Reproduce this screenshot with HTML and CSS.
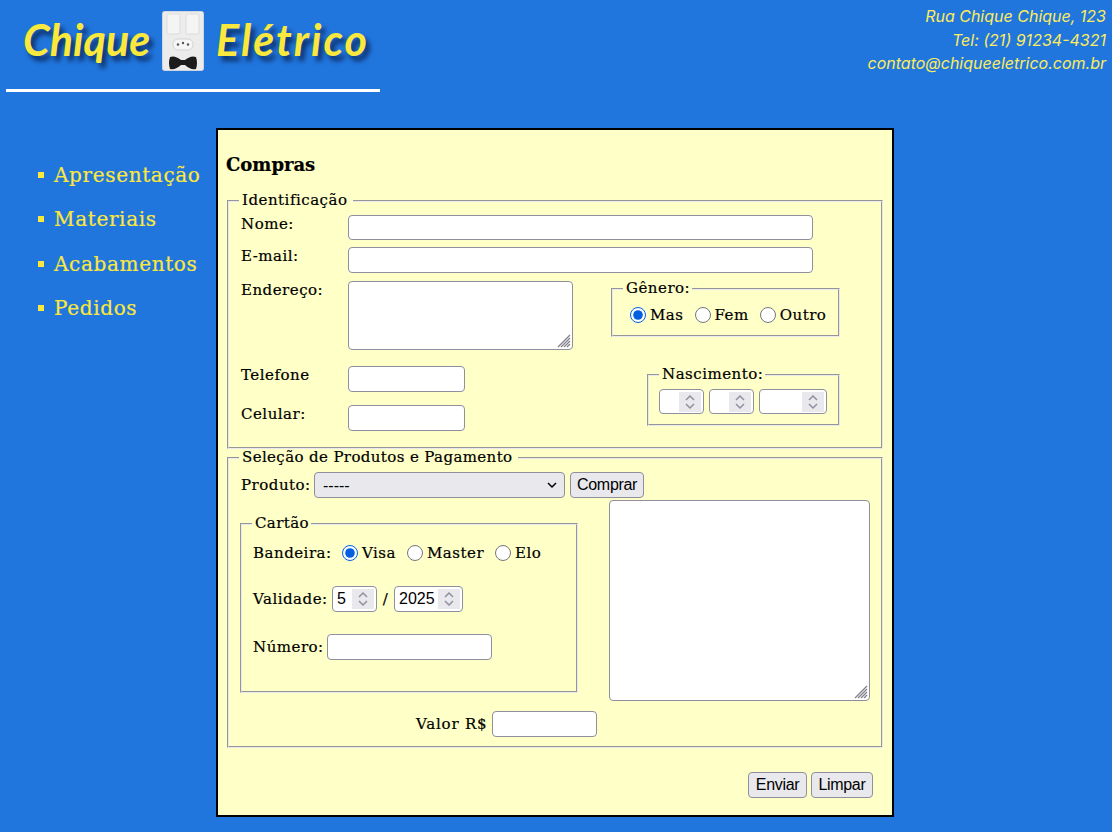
FILE: index.html
```html
<!DOCTYPE html>
<html lang="pt-BR">
<head>
    <meta charset="UTF-8">
    <meta name="viewport" content="width=device-width, initial-scale=1.0">
    <title>Chique Elétrico</title>
    <link rel="stylesheet" href="styles.css">
</head>
<body>
    <header class="topo">
        <div class="logo">
            <span class="logo-txt">Chique</span>
            <svg class="logo-img" width="42" height="60" viewBox="0 0 42 60">
                <rect x="0.5" y="0.5" width="41" height="59" rx="2" fill="#ececec" stroke="#cfd6e2"/>
                <rect x="5" y="3" width="13" height="20" rx="1" fill="#f4f4f4" stroke="#dcdcdc"/>
                <rect x="24" y="3" width="13" height="20" rx="1" fill="#f4f4f4" stroke="#dcdcdc"/>
                <rect x="11" y="28" width="20" height="11" rx="5" fill="#f6f6f6" stroke="#d4d4d4"/>
                <circle cx="16" cy="33.500" r="1.200" fill="#555"/>
                <circle cx="21" cy="32" r="1.200" fill="#555"/>
                <circle cx="26" cy="33.500" r="1.200" fill="#555"/>
                <path d="M8 46 Q13 44 19 49 L23 49 Q29 44 34 46 Q36 52 34 58 Q28 59 23 54 L19 54 Q14 59 8 58 Q6 52 8 46 Z" fill="#1c1c1c"/>
            </svg>
            <span class="logo-txt logo-el">Elétrico</span>
        </div>
        <address class="contato">
            Rua Chique Chique, 123<br>
            Tel: (21) 91234-4321<br>
            contato@chiqueeletrico.com.br
        </address>
    </header>

    <div class="pagina">
        <nav class="menu">
            <ul>
                <li><a href="#">Apresentação</a></li>
                <li><a href="#">Materiais</a></li>
                <li><a href="#">Acabamentos</a></li>
                <li><a href="#">Pedidos</a></li>
            </ul>
        </nav>

        <main class="caixa">
            <h2>Compras</h2>
            <form>
                <fieldset class="ident">
                    <legend>Identificação</legend>
                    <div class="linha l-nome">
                        <label class="rot">Nome:</label>
                        <input type="text" class="campo w-longo">
                    </div>
                    <div class="linha l-email">
                        <label class="rot">E-mail:</label>
                        <input type="text" class="campo w-longo">
                    </div>
                    <div class="ident-baixo">
                        <div class="col-esq">
                            <div class="linha">
                                <label class="rot">Endereço:</label>
                                <span class="area area-end">
                                    <textarea></textarea>
                                    <svg class="grip" width="14" height="14" viewBox="0 0 14 14"><path d="M13 1 L1 13 M13 4 L4 13 M13 7 L7 13 M13 10 L10 13" stroke="#80808c" fill="none"/></svg>
                                </span>
                            </div>
                            <div class="linha l-tel">
                                <label class="rot">Telefone</label>
                                <input type="text" class="campo w-tel">
                            </div>
                            <div class="linha l-cel">
                                <label class="rot">Celular:</label>
                                <input type="text" class="campo w-tel">
                            </div>
                        </div>
                        <div class="col-dir">
                            <fieldset class="genero">
                                <legend>Gênero:</legend>
                                <label class="opc"><input type="radio" name="genero" checked>Mas</label>
                                <label class="opc"><input type="radio" name="genero">Fem</label>
                                <label class="opc"><input type="radio" name="genero">Outro</label>
                            </fieldset>
                            <fieldset class="nasc">
                                <legend>Nascimento:</legend>
                                <span class="num w-45"><input type="text"><span class="spin"><svg width="12" height="18" viewBox="0 0 12 18"><path d="M2 7 L6 3 L10 7 M2 11 L6 15 L10 11" stroke="#8f8f9d" stroke-width="1.500" fill="none"/></svg></span></span>
                                <span class="num w-45"><input type="text"><span class="spin"><svg width="12" height="18" viewBox="0 0 12 18"><path d="M2 7 L6 3 L10 7 M2 11 L6 15 L10 11" stroke="#8f8f9d" stroke-width="1.500" fill="none"/></svg></span></span>
                                <span class="num w-68"><input type="text"><span class="spin"><svg width="12" height="18" viewBox="0 0 12 18"><path d="M2 7 L6 3 L10 7 M2 11 L6 15 L10 11" stroke="#8f8f9d" stroke-width="1.500" fill="none"/></svg></span></span>
                            </fieldset>
                        </div>
                    </div>
                </fieldset>

                <fieldset class="selecao">
                    <legend>Seleção de Produtos e Pagamento</legend>
                    <div class="linha l-prod">
                        <label class="prod-rot">Produto:</label>
                        <select class="produto"><option>-----</option></select>
                        <button type="button">Comprar</button>
                    </div>
                    <div class="pagamento">
                        <fieldset class="cartao">
                            <legend>Cartão</legend>
                            <div class="linha l-band">
                                <label class="band-rot">Bandeira:</label>
                                <label class="opc"><input type="radio" name="band" checked>Visa</label>
                                <label class="opc"><input type="radio" name="band">Master</label>
                                <label class="opc"><input type="radio" name="band">Elo</label>
                            </div>
                            <div class="linha l-val">
                                <label class="val-rot">Validade:</label>
                                <span class="num w-45"><input type="text" value="5"><span class="spin"><svg width="12" height="18" viewBox="0 0 12 18"><path d="M2 7 L6 3 L10 7 M2 11 L6 15 L10 11" stroke="#8f8f9d" stroke-width="1.500" fill="none"/></svg></span></span>
                                <span class="barra">/</span>
                                <span class="num w-69"><input type="text" value="2025"><span class="spin"><svg width="12" height="18" viewBox="0 0 12 18"><path d="M2 7 L6 3 L10 7 M2 11 L6 15 L10 11" stroke="#8f8f9d" stroke-width="1.500" fill="none"/></svg></span></span>
                            </div>
                            <div class="linha l-numero">
                                <label class="num-rot">Número:</label>
                                <input type="text" class="campo w-num">
                            </div>
                        </fieldset>
                        <span class="area area-lista">
                            <textarea></textarea>
                            <svg class="grip" width="14" height="14" viewBox="0 0 14 14"><path d="M13 1 L1 13 M13 4 L4 13 M13 7 L7 13 M13 10 L10 13" stroke="#80808c" fill="none"/></svg>
                        </span>
                    </div>
                    <div class="linha l-valor">
                        <label class="valor-rot">Valor R$</label>
                        <input type="text" class="campo w-valor">
                    </div>
                </fieldset>

                <div class="botoes">
                    <button type="submit">Enviar</button>
                    <button type="reset">Limpar</button>
                </div>
            </form>
        </main>
    </div>
</body>
</html>
```

FILE: styles.css
```css
* {
    box-sizing: border-box;
}
body {
    margin: 0;
    background-color: #2176dd;
    font-family: "DejaVu Serif", serif;
    font-size: 15px;
    letter-spacing: 0.5px;
    -webkit-text-stroke: 0.2px;
    color: #000;
}
.topo {
    display: flex;
    justify-content: space-between;
    align-items: flex-start;
    height: 128px;
    padding: 0 6px;
    letter-spacing: normal;
    -webkit-text-stroke: 0;
}
.logo {
    display: flex;
    align-items: flex-start;
    gap: 12px;
    width: 374px;
    height: 92px;
    padding: 11px 0 0 17px;
    border-bottom: 3px solid #fff;
}
.logo-txt {
    font-family: "Lato", sans-serif;
    font-style: italic;
    font-weight: 700;
    font-size: 43px;
    line-height: 58px;
    color: #fbe83c;
    text-shadow: 4px 5px 5px #0b2c63;
}
.logo-el {
    letter-spacing: 2px;
}
.logo-img {
    display: block;
}
.contato {
    padding-top: 5px;
    font-family: "Inter", sans-serif;
    font-style: italic;
    font-size: 16px;
    line-height: 23.500px;
    text-align: right;
    color: #fbec5e;
}
.pagina {
    display: flex;
    align-items: flex-start;
}
.menu {
    width: 216px;
}
.menu ul {
    margin: 0;
    padding: 25px 0 0 38px;
    list-style: none;
}
.menu li {
    display: flex;
    align-items: center;
    gap: 10px;
    height: 44.300px;
    font-size: 20px;
    letter-spacing: 0.65px;
}
.menu li::before {
    content: "";
    width: 6px;
    height: 6px;
    background-color: #fbe83c;
}
.menu a {
    color: #fbe83c;
    text-decoration: none;
}
.caixa {
    width: 678px;
    height: 689px;
    padding: 0 8px;
    background-color: #ffffc8;
    border: 2px solid #000;
}
h2 {
    margin: 0;
    padding-top: 24px;
    height: 62px;
    font-size: 18px;
    letter-spacing: 0;
    line-height: 22px;
}
fieldset {
    margin: 0 1px;
    padding: 0 12px;
    border: 2px groove #e9e9ed;
}
legend {
    margin-left: -2px;
    padding: 0 6px 0 3px;
    line-height: 17px;
}
.selecao legend {
    letter-spacing: 0.38px;
}
.ident {
    height: 257px;
}
.selecao {
    height: 299px;
}
.linha {
    display: flex;
    align-items: flex-start;
}
.rot {
    width: 107px;
    padding-top: 1px;
    line-height: 17px;
}
input,
textarea,
select,
button {
    -webkit-text-stroke: 0;
}
input[type="text"] {
    font-family: "Liberation Sans", sans-serif;
    font-size: 16px;
    outline: none;
}
input[type="radio"] {
    accent-color: #0060df;
}
.campo {
    height: 26px;
    padding: 0 4px;
    background: #fff;
    border: 1px solid #8f8f9d;
    border-radius: 4px;
}
.w-longo {
    width: 465px;
}
.w-tel {
    width: 117px;
}
.w-num {
    width: 165px;
}
.w-valor {
    width: 105px;
}
.l-nome {
    margin-top: 6px;
}
.l-nome .campo {
    height: 25px;
}
.l-email {
    margin-top: 7px;
}
.ident-baixo {
    display: flex;
    justify-content: space-between;
    margin-top: 8px;
}
.l-tel {
    margin-top: 16px;
}
.l-cel {
    margin-top: 13px;
}
.area {
    display: block;
    position: relative;
}
.area textarea {
    display: block;
    width: 100%;
    height: 100%;
    background: #fff;
    border: 1px solid #8f8f9d;
    border-radius: 4px;
    resize: none;
    outline: none;
}
.grip {
    position: absolute;
    right: 2px;
    bottom: 2px;
}
.grip path {
    stroke-width: 1.300;
}
.area-end {
    width: 225px;
    height: 69px;
}
.area-lista {
    width: 261px;
    height: 201px;
    margin-right: -1px;
}
.col-dir {
    display: flex;
    flex-direction: column;
    align-items: flex-end;
    padding-right: 29px;
}
.genero {
    display: flex;
    gap: 11px;
    width: 229px;
    height: 57px;
    margin: -1px 0 0;
    padding: 8px 10px 0 17px;
}
.genero legend {
    margin-left: -7px;
    padding-right: 2px;
}
.opc {
    display: inline-flex;
    align-items: center;
    line-height: 20px;
}
.opc input {
    width: 16px;
    height: 16px;
    margin: 0 4px 0 0;
}
.nasc {
    display: flex;
    gap: 5px;
    width: 193px;
    height: 60px;
    margin: 29px 0 0;
    padding: 6px 10px 0;
}
.nasc legend {
    margin-left: 0;
    padding-right: 2px;
}
.nasc .num {
    height: 25px;
}
.num {
    display: inline-flex;
    align-items: center;
    flex: none;
    height: 26px;
    padding: 2px;
    background: #fff;
    border: 1px solid #8f8f9d;
    border-radius: 4px;
}
.num input[type="text"] {
    flex: 1;
    min-width: 0;
    height: 20px;
    padding: 0 2px;
    border: none;
    background: transparent;
}
.spin {
    display: flex;
    align-items: center;
    justify-content: center;
    flex: none;
    width: 22px;
    height: 20px;
    background: #e9e9ed;
}
.w-45 {
    width: 45px;
}
.w-68 {
    width: 68px;
}
.w-69 {
    width: 69px;
}
.l-prod {
    align-items: center;
    height: 26px;
    margin-top: 6px;
    gap: 5px;
}
.prod-rot {
    width: 68px;
}
select {
    width: 251px;
    height: 26px;
    padding: 0 8px;
    font-family: "Liberation Sans", sans-serif;
    font-size: 16px;
    background: #e9e9ed url("data:image/svg+xml,%3Csvg xmlns='http://www.w3.org/2000/svg' width='12' height='12'%3E%3Cpath d='M2 4 L6 8 L10 4' stroke='%23000' stroke-width='1.500' fill='none'/%3E%3C/svg%3E") no-repeat right 6px center;
    border: 1px solid #8f8f9d;
    border-radius: 4px;
    appearance: none;
    outline: none;
}
button {
    height: 26px;
    padding: 0 6px;
    font-family: "Liberation Sans", sans-serif;
    font-size: 16px;
    letter-spacing: -0.3px;
    background-color: #e9e9ed;
    border: 1px solid #8f8f9d;
    border-radius: 4px;
}
.botoes button {
    padding: 0 6.500px;
}
.pagamento {
    display: flex;
    justify-content: space-between;
    align-items: flex-start;
    margin-top: 2px;
}
.cartao {
    width: 338px;
    height: 178px;
    margin: 15px 0 0 -1px;
    padding: 0 11px;
}
.cartao legend {
    margin-left: -1px;
    padding-right: 2px;
}
.l-band {
    align-items: center;
    height: 20px;
    margin-top: 11px;
}
.band-rot {
    width: 89px;
}
.l-band .opc {
    margin-right: 11px;
}
.l-val {
    align-items: center;
    margin-top: 23px;
}
.val-rot {
    width: 79px;
}
.barra {
    width: 17px;
    text-align: center;
}
.l-numero {
    align-items: center;
    margin-top: 22px;
}
.num-rot {
    width: 74px;
}
.l-valor {
    align-items: center;
    margin-top: 10px;
    padding-left: 175px;
}
.valor-rot {
    width: 76px;
    letter-spacing: 0.8px;
}
.botoes {
    display: flex;
    justify-content: flex-end;
    gap: 4px;
    margin-top: 24px;
    padding-right: 11px;
}
```
